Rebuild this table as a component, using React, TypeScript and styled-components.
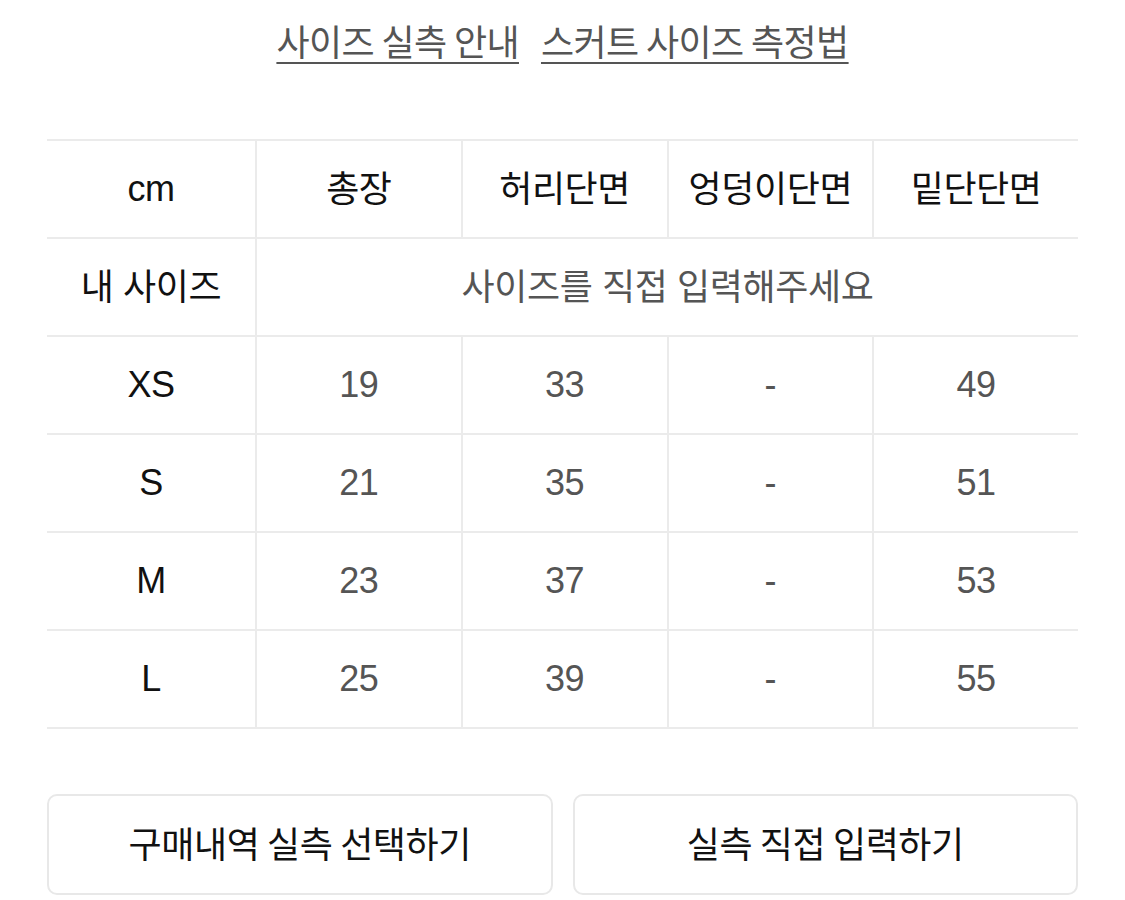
import React from "react";
import styled, { createGlobalStyle } from "styled-components";

const Global = createGlobalStyle`
  html, body { margin: 0; padding: 0; background: #fff; }
  body { font-family: "Liberation Sans", "Noto Sans CJK KR", sans-serif; }
`;

const Page = styled.div`
  width: 1125px;
  padding: 0 47px;
  box-sizing: border-box;
`;

const Links = styled.div`
  display: flex;
  justify-content: center;
  gap: 22px;
  padding-top: 14px;
  height: 139px;
  box-sizing: border-box;
`;

const LinkText = styled.a`
  font-family: "Noto Sans CJK KR", sans-serif;
  font-size: 36px;
  line-height: 52px;
  height: 52px;
  color: #555;
  text-decoration: underline;
  text-decoration-thickness: 2px;
  text-underline-offset: 6px;
  letter-spacing: -0.6px;
`;

const Table = styled.div`
  display: grid;
  grid-template-columns: 208px repeat(4, 1fr);
  border-top: 2px solid #ebebeb;
`;

const Cell = styled.div<{ $first?: boolean; $head?: boolean; $span?: number; $ko?: boolean }>`
  height: 98px;
  box-sizing: border-box;
  padding-bottom: ${(p) => (p.$ko ? "6px" : "0")};
  display: flex;
  align-items: center;
  justify-content: center;
  border-bottom: 2px solid #ebebeb;
  border-left: ${(p) => (p.$first ? "none" : "2px solid #ebebeb")};
  grid-column: ${(p) => (p.$span ? `span ${p.$span}` : "auto")};
  font-size: 36px;
  color: ${(p) => (p.$head ? "#111" : "#555")};
  font-weight: 400;
  letter-spacing: -0.4px;
`;

const Buttons = styled.div`
  display: grid;
  grid-template-columns: 1fr 1fr;
  gap: 20px;
  margin-top: 65px;
`;

const Button = styled.button`
  height: 101px;
  padding: 0 0 6px;
  border: 2px solid #e8e8e8;
  border-radius: 10px;
  background: #fff;
  font-family: "Noto Sans CJK KR", sans-serif;
  font-size: 36px;
  font-weight: 400;
  color: #111;
  letter-spacing: -0.4px;
`;

const headers = ["총장", "허리단면", "엉덩이단면", "밑단단면"];
const rows: [string, string, string, string, string][] = [
  ["XS", "19", "33", "-", "49"],
  ["S", "21", "35", "-", "51"],
  ["M", "23", "37", "-", "53"],
  ["L", "25", "39", "-", "55"],
];

export default function App() {
  return (
    <Page>
      <Global />
      <Links>
        <LinkText>사이즈 실측 안내</LinkText>
        <LinkText>스커트 사이즈 측정법</LinkText>
      </Links>
      <Table>
        <Cell $first $head>cm</Cell>
        {headers.map((h) => (
          <Cell key={h} $head $ko>{h}</Cell>
        ))}
        <Cell $first $head $ko>내 사이즈</Cell>
        <Cell $span={4} $ko>사이즈를 직접 입력해주세요</Cell>
        {rows.map((r) =>
          r.map((v, i) => (
            <Cell key={r[0] + i} $first={i === 0} $head={i === 0}>
              {v}
            </Cell>
          ))
        )}
      </Table>
      <Buttons>
        <Button>구매내역 실측 선택하기</Button>
        <Button>실측 직접 입력하기</Button>
      </Buttons>
    </Page>
  );
}
